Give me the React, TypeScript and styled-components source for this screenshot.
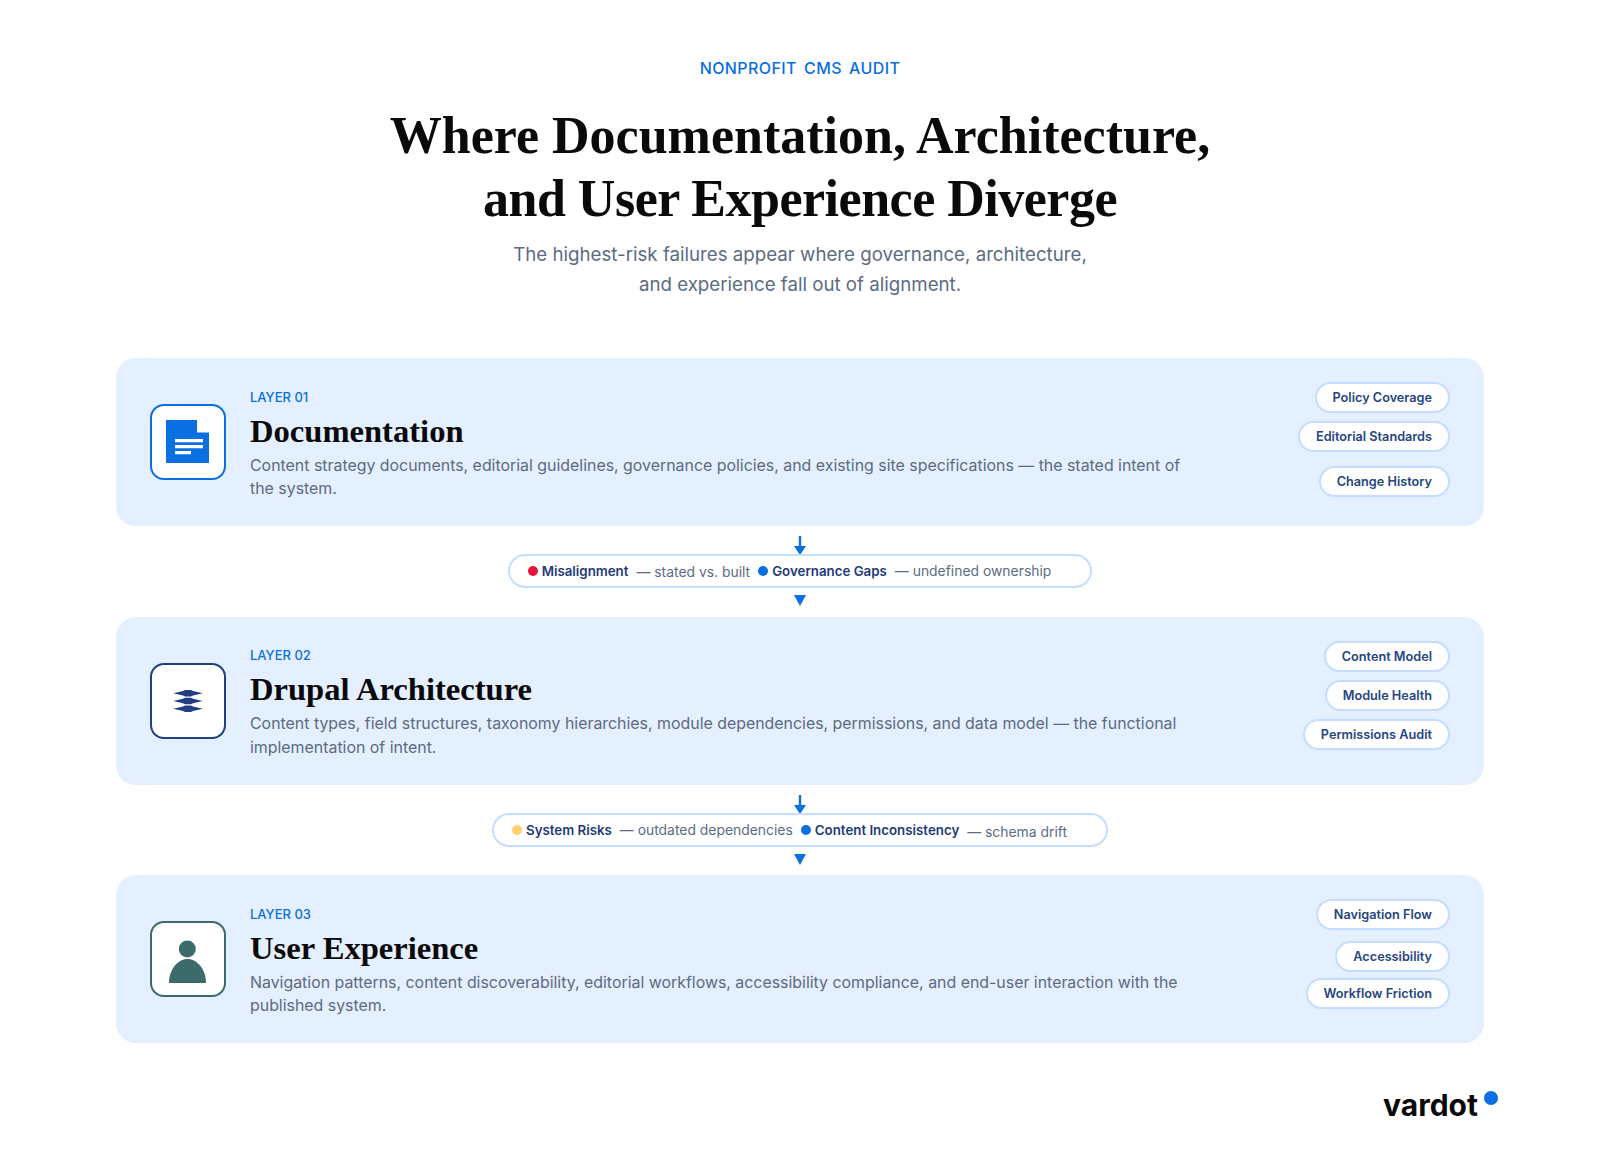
import React from 'react';
import styled, { createGlobalStyle } from 'styled-components';

const BLUE = '#0a6fe0';
const NAVY = '#1f3a78';
const GREY = '#5c6b82';

const GlobalStyle = createGlobalStyle`
  html, body {
    margin: 0;
    padding: 0;
    background: #fff;
  }
  * {
    box-sizing: border-box;
  }
`;

const layers = [
  {
    id: '01',
    title: 'Documentation',
    text: 'Content strategy documents, editorial guidelines, governance policies, and existing site specifications — the stated intent of the system.',
    accent: BLUE,
    icon: 'doc',
    tags: [
      { label: 'Policy Coverage', gap: 0 },
      { label: 'Editorial Standards', gap: 8 },
      { label: 'Change History', gap: 14 },
    ],
  },
  {
    id: '02',
    title: 'Drupal Architecture',
    text: 'Content types, field structures, taxonomy hierarchies, module dependencies, permissions, and data model — the functional implementation of intent.',
    accent: '#1f3f80',
    icon: 'stack',
    tags: [
      { label: 'Content Model', gap: 0 },
      { label: 'Module Health', gap: 8 },
      { label: 'Permissions Audit', gap: 8 },
    ],
  },
  {
    id: '03',
    title: 'User Experience',
    text: 'Navigation patterns, content discoverability, editorial workflows, accessibility compliance, and end-user interaction with the published system.',
    accent: '#3d6b6b',
    icon: 'user',
    tags: [
      { label: 'Navigation Flow', gap: 0 },
      { label: 'Accessibility', gap: 11 },
      { label: 'Workflow Friction', gap: 6 },
    ],
  },
];

const connectors = [
  [
    { dot: '#e8133c', name: 'Misalignment', note: 'stated vs. built', drop: 1 },
    { dot: BLUE, name: 'Governance Gaps', note: 'undefined ownership', drop: 0 },
  ],
  [
    { dot: '#ffcf70', name: 'System Risks', note: 'outdated dependencies', drop: 0 },
    { dot: BLUE, name: 'Content Inconsistency', note: 'schema drift', drop: 2 },
  ],
];

// 카드 왼쪽 아이콘
const LayerIcon = ({ type }: { type: string }) => {
  if (type === 'doc') {
    return (
      <svg width="72" height="72" viewBox="0 0 72 72">
        <path d="M14 14H45V26.500H57V57H14Z" fill={BLUE} />
        <path d="M23 33H51V36.300H23ZM23 39H51V42.300H23ZM23 45H39V48.200H23Z" fill="#fff" />
      </svg>
    );
  }
  if (type === 'stack') {
    return (
      <svg width="72" height="72" viewBox="0 0 72 72">
        <path
          d="M21.300 28.300L31 26L33 25H39L41 26L50.700 28.300L41 30.600L39 31.600H33L31 30.600ZM21.300 36L31 33.700L33 32.700H39L41 33.700L50.700 36L41 38.300L39 39.300H33L31 38.300ZM21.300 43.700L31 41.400L33 40.400H39L41 41.400L50.700 43.700L41 46L39 47H33L31 46Z"
          fill="#1f3f80"
        />
      </svg>
    );
  }
  return (
    <svg width="72" height="72" viewBox="0 0 72 72">
      <circle cx="35.300" cy="26" r="8.500" fill="#3d6b6b" />
      <path d="M17 60C17 46 26 36 35.500 36C45 36 54 46 54 60Z" fill="#3d6b6b" />
    </svg>
  );
};

const App = () => (
  <Page>
    <GlobalStyle />
    <Header>
      <Eyebrow>NONPROFIT CMS AUDIT</Eyebrow>
      <Title>
        Where Documentation, Architecture,
        <br />
        <TitleTight>and User Experience Diverge</TitleTight>
      </Title>
      <Subtitle>
        The highest-risk failures appear where governance, architecture,
        <br />
        and experience fall out of alignment.
      </Subtitle>
    </Header>

    <Stack>
      {layers.map((layer, index) => (
        <React.Fragment key={layer.id}>
          <Card>
            <IconBox $accent={layer.accent}>
              <LayerIcon type={layer.icon} />
            </IconBox>
            <CardBody>
              <LayerLabel>LAYER {layer.id}</LayerLabel>
              <LayerTitle>{layer.title}</LayerTitle>
              <LayerText>{layer.text}</LayerText>
            </CardBody>
            <Tags>
              {layer.tags.map((tag) => (
                <Tag key={tag.label} $gap={tag.gap}>
                  {tag.label}
                </Tag>
              ))}
            </Tags>
          </Card>
          {connectors[index] && (
            <Connector>
              <svg width="12" height="19" viewBox="0 0 12 19">
                <path d="M4.800 0H7.200V10H12L6 19L0 10H4.800Z" fill={BLUE} />
              </svg>
              <FindingPill>
                {connectors[index].map((item) => (
                  <Finding key={item.name}>
                    <Dot $color={item.dot} />
                    <FindingName>{item.name}</FindingName>
                    <FindingNote $drop={item.drop}>— {item.note}</FindingNote>
                  </Finding>
                ))}
              </FindingPill>
              <DownTriangle viewBox="0 0 12 11">
                <path d="M0 0H12L6 11Z" fill={BLUE} />
              </DownTriangle>
            </Connector>
          )}
        </React.Fragment>
      ))}
    </Stack>

    <Footer>
      <Logo>
        vardot
        <LogoDot />
      </Logo>
    </Footer>
  </Page>
);

const Page = styled.main`
  width: 1600px;
  height: 1167px;
  padding: 58px 116px 0;
  background: #fff;
  font-family: Inter, 'Noto Sans', sans-serif;
  overflow: hidden;
`;

const Header = styled.header`
  display: flex;
  flex-direction: column;
  align-items: center;
  text-align: center;
`;

const Eyebrow = styled.div`
  color: ${BLUE};
  font-size: 16px;
  line-height: 20px;
  font-weight: 500;
  letter-spacing: 0.4px;
  word-spacing: 2.500px;
`;

const Title = styled.h1`
  margin: 26px 0 0;
  color: #0a0a0a;
  font-family: 'Liberation Serif', serif;
  font-size: 52px;
  line-height: 63px;
  font-weight: 700;
`;

const TitleTight = styled.span`
  letter-spacing: -0.5px;
`;

const Subtitle = styled.p`
  margin: 10px 0 0;
  color: ${GREY};
  font-size: 18.700px;
  line-height: 30px;
`;

const Stack = styled.section`
  display: flex;
  flex-direction: column;
  margin-top: 58px;
`;

const Card = styled.article`
  display: flex;
  align-items: center;
  height: 168px;
  padding: 0 34px;
  border-radius: 20px;
  background: #e4efff;
`;

const IconBox = styled.div<{ $accent: string }>`
  display: flex;
  flex: none;
  width: 76px;
  height: 76px;
  border: 2px solid ${({ $accent }) => $accent};
  border-radius: 14px;
  background: #fff;
  align-items: center;
  justify-content: center;
`;

const CardBody = styled.div`
  flex: 1;
  margin-left: 24px;
  padding-top: 5px;
`;

const LayerLabel = styled.div`
  color: ${BLUE};
  font-size: 13px;
  line-height: 16px;
  font-weight: 500;
`;

const LayerTitle = styled.h2`
  margin: 7px 0 0;
  color: #0a0a0a;
  font-family: 'Liberation Serif', serif;
  font-size: 32.600px;
  line-height: 38px;
  font-weight: 700;
`;

const LayerText = styled.p`
  width: 940px;
  margin: 4px 0 0;
  color: ${GREY};
  font-size: 15.900px;
  line-height: 23.500px;
`;

const Tags = styled.div`
  display: flex;
  flex: none;
  flex-direction: column;
  align-items: flex-end;
  align-self: flex-start;
  margin-top: 24px;
`;

const Tag = styled.span<{ $gap: number }>`
  display: block;
  margin-top: ${({ $gap }) => $gap}px;
  padding: 0 16px;
  border: 2px solid #c4ddff;
  border-radius: 16px;
  background: #fff;
  color: #264581;
  font-size: 12.700px;
  line-height: 27px;
  font-weight: 600;
`;

const Connector = styled.div`
  display: flex;
  flex-direction: column;
  align-items: center;
  height: 90.500px;
  padding-top: 10px;
`;

const FindingPill = styled.div`
  display: flex;
  gap: 8px;
  height: 34px;
  margin-top: -1px;
  padding: 0 39px 0 18px;
  border: 2px solid #c4ddff;
  border-radius: 17px;
  background: #fff;
  align-items: center;
`;

const Finding = styled.div`
  display: flex;
  align-items: center;
`;

const Dot = styled.span<{ $color: string }>`
  width: 10px;
  height: 10px;
  margin-right: 4px;
  border-radius: 50%;
  background: ${({ $color }) => $color};
`;

const FindingName = styled.span`
  color: ${NAVY};
  font-size: 13.300px;
  font-weight: 600;
`;

const FindingNote = styled.span<{ $drop: number }>`
  margin-left: 8px;
  margin-top: ${({ $drop }) => $drop * 2}px;
  color: ${GREY};
  font-size: 13.900px;
`;

const DownTriangle = styled.svg`
  width: 12px;
  height: 11px;
  margin-top: 7px;
`;

const Footer = styled.footer`
  display: flex;
  justify-content: flex-end;
  margin-top: 44px;
  padding-right: 6px;
`;

const Logo = styled.div`
  position: relative;
  color: #0a0a0a;
  font-size: 30px;
  line-height: 36px;
  font-weight: 700;
`;

const LogoDot = styled.span`
  position: absolute;
  top: 4px;
  right: -20px;
  width: 14px;
  height: 14px;
  border-radius: 50%;
  background: ${BLUE};
`;

export default App;
